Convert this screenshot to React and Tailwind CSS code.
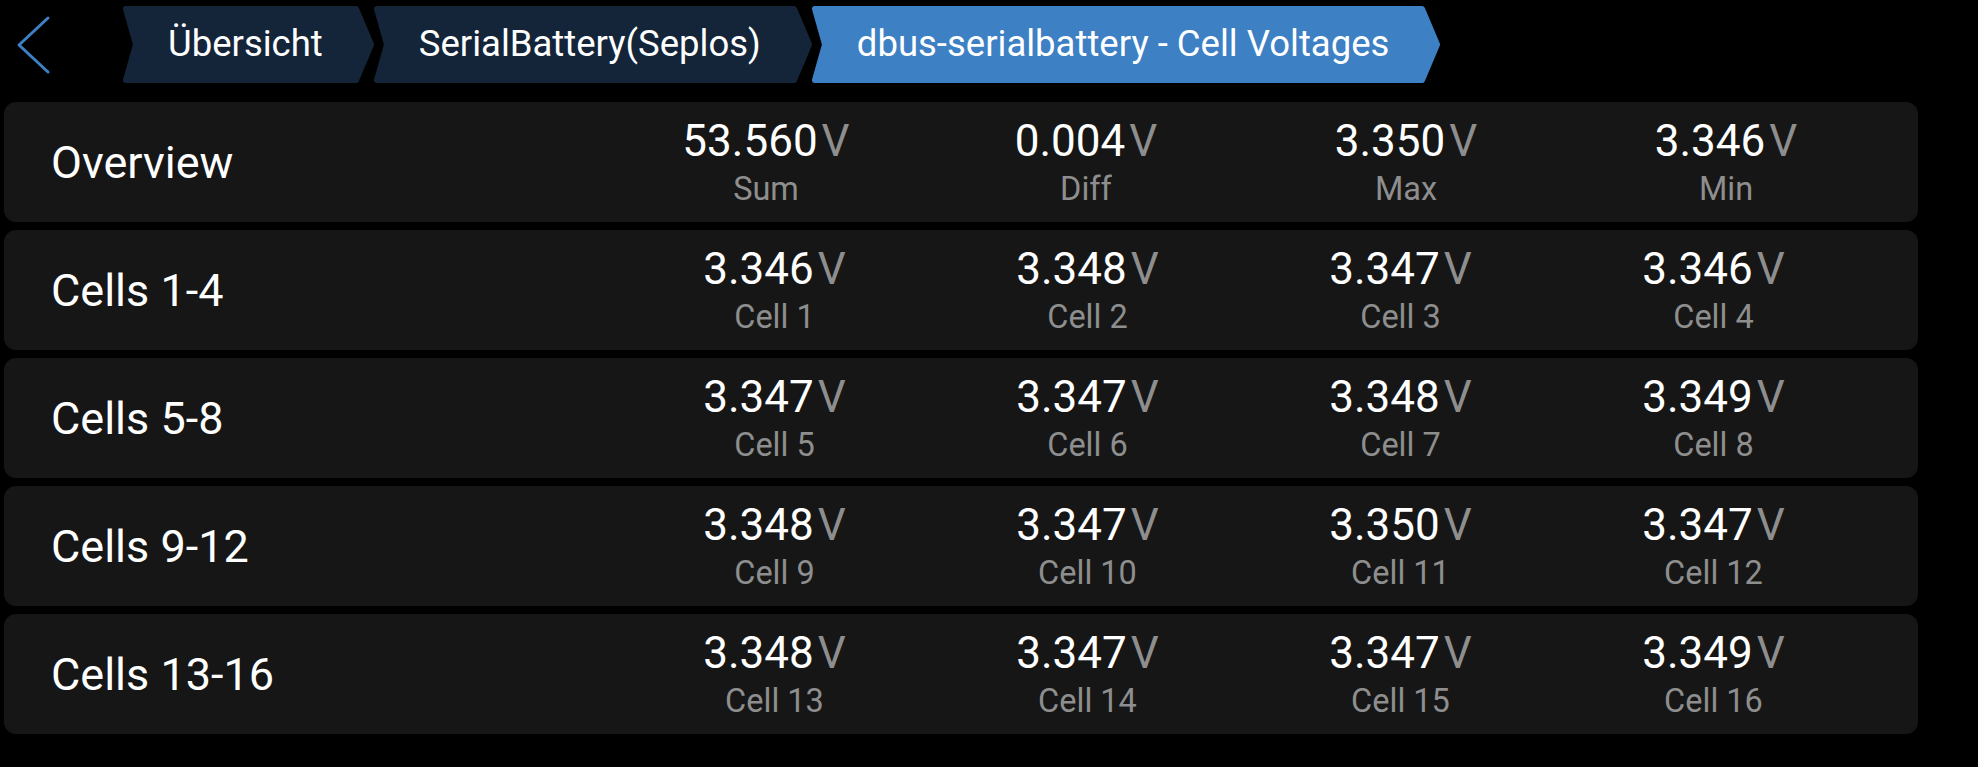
import React from "react";

const crumbs = [
  { title: "Übersicht", active: false },
  { title: "SerialBattery(Seplos)", active: false },
  { title: "dbus-serialbattery - Cell Voltages", active: true },
];

const rows = [
  {
    title: "Overview",
    wide: true,
    items: [
      { value: "53.560", label: "Sum" },
      { value: "0.004", label: "Diff" },
      { value: "3.350", label: "Max" },
      { value: "3.346", label: "Min" },
    ],
  },
  {
    title: "Cells 1-4",
    items: [
      { value: "3.346", label: "Cell 1" },
      { value: "3.348", label: "Cell 2" },
      { value: "3.347", label: "Cell 3" },
      { value: "3.346", label: "Cell 4" },
    ],
  },
  {
    title: "Cells 5-8",
    items: [
      { value: "3.347", label: "Cell 5" },
      { value: "3.347", label: "Cell 6" },
      { value: "3.348", label: "Cell 7" },
      { value: "3.349", label: "Cell 8" },
    ],
  },
  {
    title: "Cells 9-12",
    items: [
      { value: "3.348", label: "Cell 9" },
      { value: "3.347", label: "Cell 10" },
      { value: "3.350", label: "Cell 11" },
      { value: "3.347", label: "Cell 12" },
    ],
  },
  {
    title: "Cells 13-16",
    items: [
      { value: "3.348", label: "Cell 13" },
      { value: "3.347", label: "Cell 14" },
      { value: "3.347", label: "Cell 15" },
      { value: "3.349", label: "Cell 16" },
    ],
  },
];

function Crumb({ title, active }) {
  const fill = active ? "#3d80c4" : "#14253a";
  return (
    <div className="flex h-[77px]">
      {/* left notch */}
      <svg width="16" height="77" className="shrink-0">
        <path
          d="M3 3 L16 3 L16 74 L3 74 L13 38.5 Z"
          fill={fill}
          stroke={fill}
          strokeWidth="6"
          strokeLinejoin="round"
        />
      </svg>
      <div
        className={`flex items-center pl-[29px] pr-[31px] text-[36.5px] text-white leading-none ${
          active ? "bg-[#3d80c4]" : "bg-[#14253a]"
        }`}
      >
        {title}
      </div>
      {/* right point */}
      <svg width="20" height="77" className="shrink-0">
        <path
          d="M0 3 L2 3 L17 38.5 L2 74 L0 74 Z"
          fill={fill}
          stroke={fill}
          strokeWidth="6"
          strokeLinejoin="round"
        />
      </svg>
    </div>
  );
}

function Quantity({ value, label, wide }) {
  return (
    <div className={`flex flex-col items-center ${wide ? "w-[320px]" : "w-[313px]"}`}>
      <div className="flex items-baseline text-[44px] leading-none">
        <span className="text-white">{value}</span>
        <span className="ml-[4px] text-[#8e8e8e]">V</span>
      </div>
      <div className="mt-[10px] text-[32.5px] leading-none text-[#8e8e8e]">{label}</div>
    </div>
  );
}

function App() {
  return (
    <div
      className="w-[1978px] h-[767px] bg-black overflow-hidden"
      style={{ fontFamily: "Roboto, 'Liberation Sans', sans-serif" }}
    >
      <header className="flex items-center h-[77px] mt-[6px]">
        <svg width="40" height="60" viewBox="0 0 40 60" className="ml-[15px] shrink-0">
          <path
            d="M33 3 L4 30 L33 57"
            fill="none"
            stroke="#3d80c4"
            strokeWidth="3"
            strokeLinecap="round"
            strokeLinejoin="round"
          />
        </svg>
        <nav className="flex ml-[68px]">
          {crumbs.map((c) => (
            <Crumb key={c.title} title={c.title} active={c.active} />
          ))}
        </nav>
      </header>

      <main className="mt-[19px] ml-[4px] w-[1914px] flex flex-col gap-[8px]">
        {rows.map((row) => (
          <div
            key={row.title}
            className={`flex items-center h-[120px] rounded-[12px] bg-[#161616] pl-[47px] ${
              row.wide ? "pr-[32px]" : "pr-[48px]"
            }`}
          >
            <span className="flex-1 text-[45px] leading-none text-white">{row.title}</span>
            <div className="flex">
              {row.items.map((item) => (
                <Quantity key={item.label} value={item.value} label={item.label} wide={row.wide} />
              ))}
            </div>
          </div>
        ))}
      </main>
    </div>
  );
}

export default App;
